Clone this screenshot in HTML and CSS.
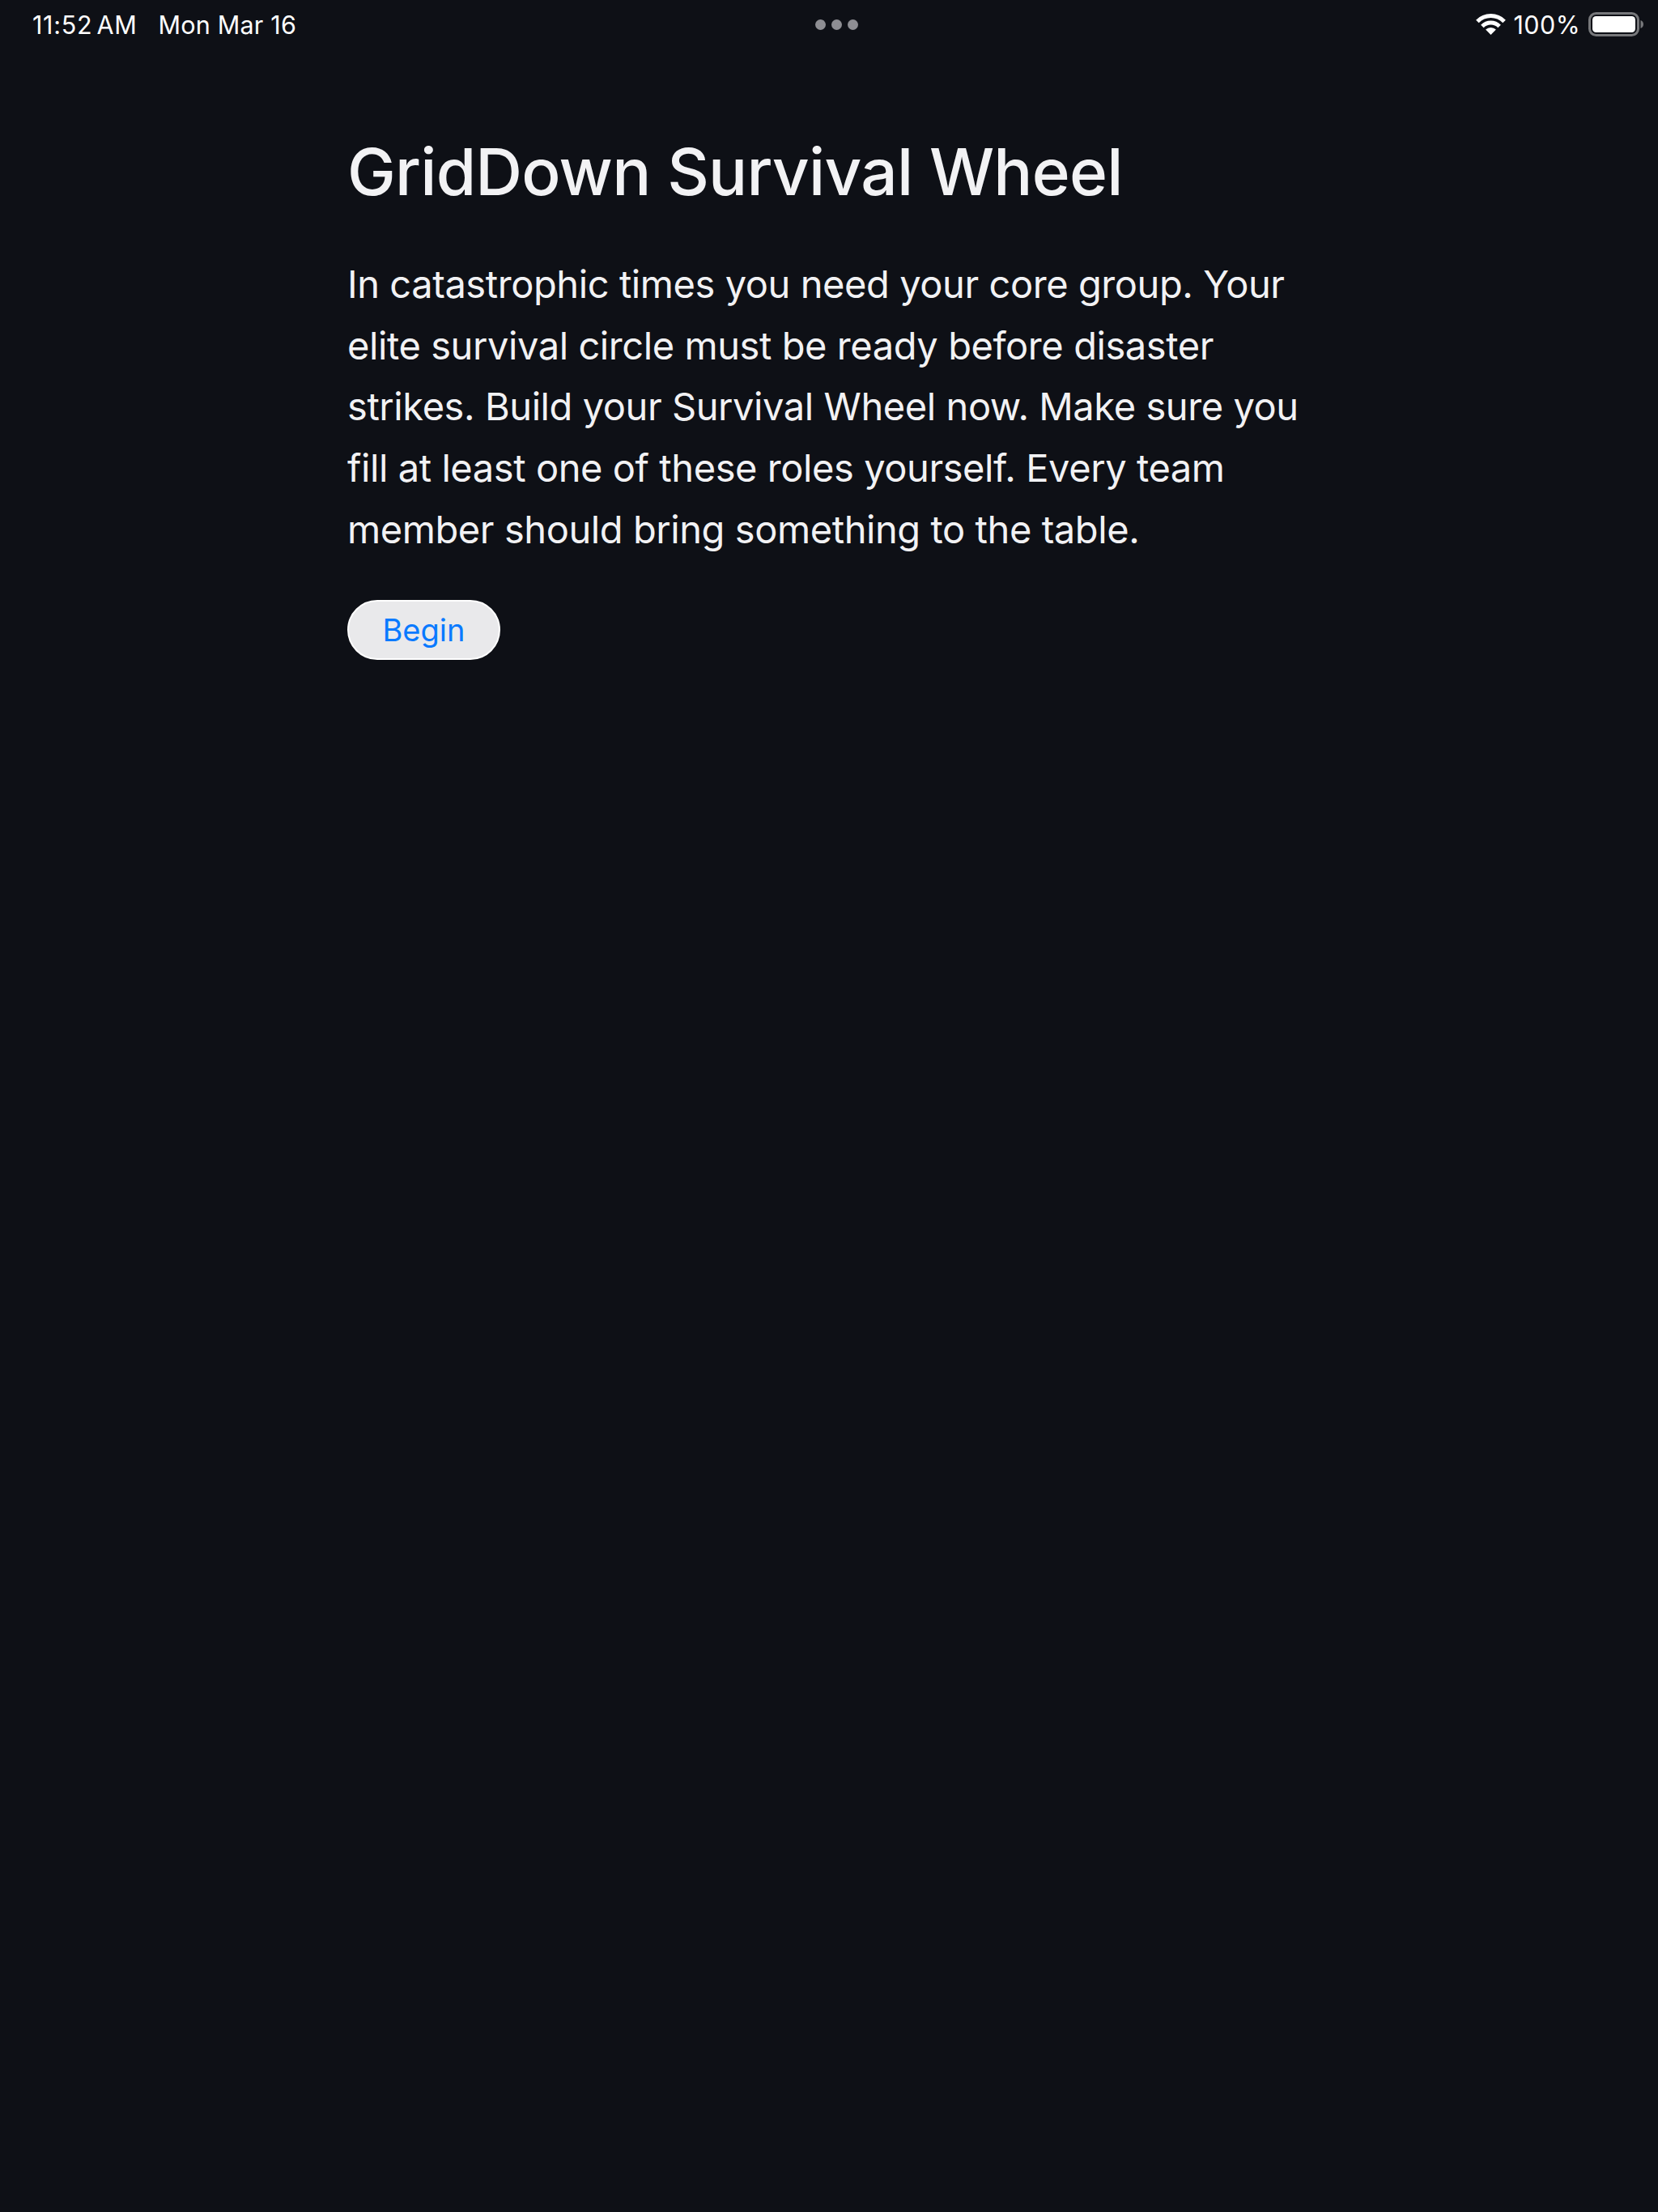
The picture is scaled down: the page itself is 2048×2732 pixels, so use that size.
FILE: index.html
```html
<!DOCTYPE html>
<html lang="en">
<head>
  <meta charset="UTF-8">
  <meta name="viewport" content="width=device-width, initial-scale=1.0">
  <title>GridDown Survival Wheel</title>
  <link rel="stylesheet" href="styles.css">
</head>
<body>
  <div class="status-bar">
    <div class="status-left">
      <span class="status-time">11:52 AM</span>
      <span class="status-date">Mon Mar 16</span>
    </div>
    <div class="status-dots">
      <span class="dot"></span>
      <span class="dot"></span>
      <span class="dot"></span>
    </div>
    <div class="status-right">
      <svg class="wifi" width="37" height="26" viewBox="0 0 37 26">
        <path d="M1.900 9.400A23.500 23.500 0 0 1 35.100 9.400" fill="none" stroke="#fff" stroke-width="5"/>
        <path d="M7.900 15.400A15 15 0 0 1 29.100 15.400" fill="none" stroke="#fff" stroke-width="5"/>
        <path d="M18.500 26L12.100 19.600A9 9 0 0 1 24.900 19.600Z" fill="#fff"/>
      </svg>
      <span class="status-battery">100%</span>
      <svg class="battery" width="68" height="30" viewBox="0 0 68 30">
        <rect x="1.500" y="1.500" width="60" height="27" rx="8" fill="none" stroke="#77787b" stroke-width="3"/>
        <rect x="5" y="5" width="53" height="20" rx="4.500" fill="#fff"/>
        <path d="M64.500 10c2 .6 3.500 2.600 3.500 5s-1.500 4.400-3.500 5z" fill="#77787b"/>
      </svg>
    </div>
  </div>

  <div class="content">
    <h1>GridDown Survival Wheel</h1>
    <p>In catastrophic times you need your core group. Your elite survival circle must be ready before disaster strikes. Build your Survival Wheel now. Make sure you fill at least one of these roles yourself. Every team member should bring something to the table.</p>
    <button class="begin-btn">Begin</button>
  </div>
</body>
</html>
```

FILE: styles.css
```css
* {
  margin: 0;
  padding: 0;
  box-sizing: border-box;
}

body {
  font-family: Inter, "Liberation Sans", sans-serif;
  background-color: #0e1016;
  color: #f2f2f4;
  min-height: 2732px;
}

.status-bar {
  height: 60px;
  padding: 0 18px 0 40px;
  display: grid;
  grid-template-columns: 1fr auto 1fr;
  align-items: center;
  color: #fff;
  font-size: 30.500px;
}

.status-left {
  display: flex;
  gap: 26px;
}

.status-time {
  letter-spacing: 0.700px;
  word-spacing: -4px;
}

.status-date {
  letter-spacing: 0.200px;
}

.status-dots {
  display: flex;
  gap: 7px;
  margin-right: 3px;
}

.dot {
  width: 13px;
  height: 13px;
  border-radius: 50%;
  background-color: #8e8e93;
}

.status-right {
  display: flex;
  justify-content: flex-end;
  align-items: center;
  gap: 10px;
}

.status-battery {
  letter-spacing: 0.400px;
}

.content {
  width: 1190px;
  margin: 0 auto;
  padding-top: 104px;
}

h1 {
  font-size: 80px;
  font-weight: 500;
  letter-spacing: -0.750px;
  line-height: 96px;
  margin-bottom: 53px;
}

.content p {
  font-size: 47px;
  letter-spacing: -0.420px;
  line-height: 75.700px;
  margin-bottom: 49px;
}

.begin-btn {
  display: block;
  width: 189px;
  height: 74px;
  border-radius: 37px;
  border: 2px solid #fff;
  background-color: #e9e9eb;
  color: #0a7aff;
  font-family: inherit;
  font-size: 38px;
}
```
